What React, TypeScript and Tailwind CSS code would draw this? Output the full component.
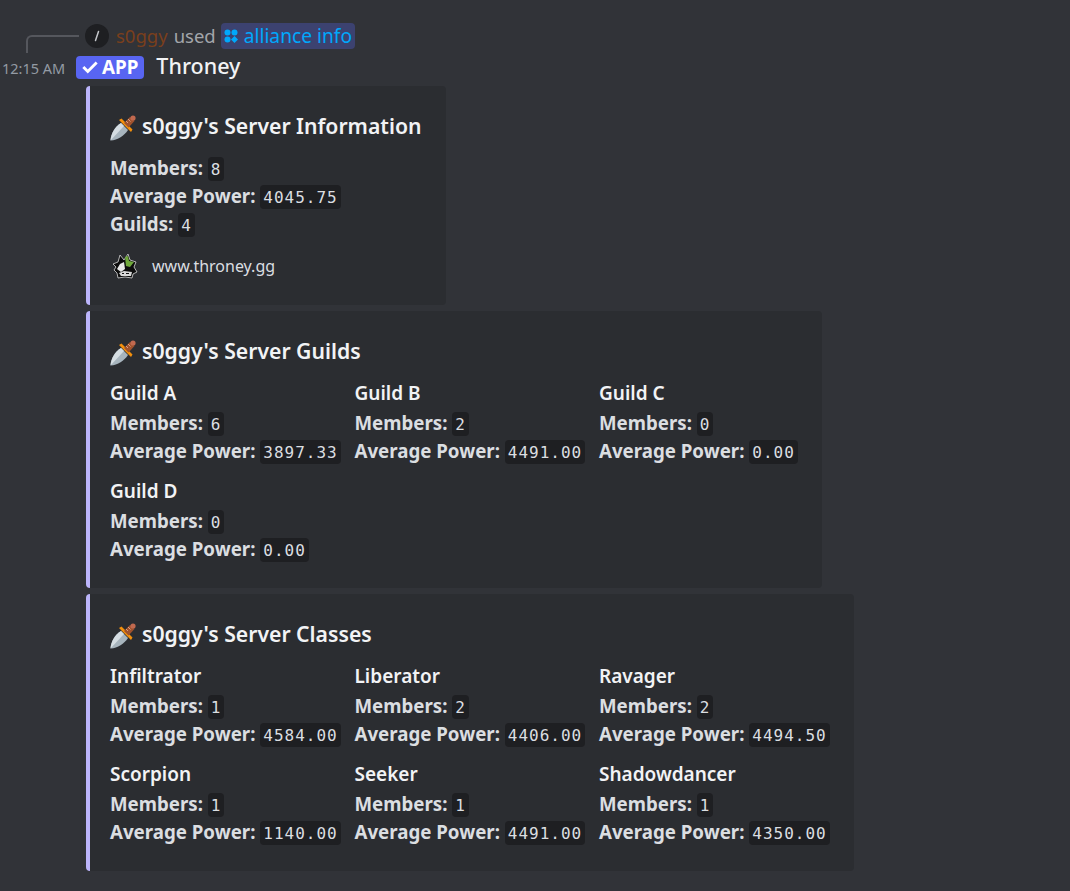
const sans = "font-['Noto_Sans','Open_Sans',sans-serif]";

function Dagger() {
  return (
    <svg width="26" height="26" viewBox="0 0 26 26" className="mr-[6px] mt-[4px] shrink-0">
      <path d="M0.5 25.5 C1 18 5 12 11 8 L18 15 C14 21 8 25 0.5 25.5 Z" fill="#a7b4bd" />
      <path d="M0.5 25.5 C1 18 5 12 11 8 L14 11 Z" fill="#d5dde2" />
      <path d="M9 5 L11.5 3.5 L22.5 14.5 L21 17 Z" fill="#f4900c" />
      <path d="M14 8 L20 2 L24.5 6 L18.5 12.5 Z" fill="#a0522d" />
      <path d="M16 6 L18 8 M18 4 L20.5 6.5" stroke="#d99e82" strokeWidth="1" />
      <circle cx="23" cy="3" r="2.6" fill="#c1694f" />
    </svg>
  );
}

function Logo() {
  return (
    <svg width="26" height="26" viewBox="0 0 26 26" className="ml-[2px] shrink-0">
      <path d="M1 11 L6 9 L8 2 L12 7 L16 1 L18 7 L24 9 L22 14 L25 19 L21 21 L20 25 L13 24 L6 25 L5 20 L2 17 L4 14 Z" fill="#0c0c0c" stroke="#d8d8d8" strokeWidth="0.8" />
      <path d="M8 11 L12 9 L13 16 L9 19 L5 16 Z" fill="#e8e8e8" />
      <path d="M13 4 L16 3 L17 8 L22 9 L18 14 L14 13 Z" fill="#6fa83a" />
      <path d="M7 20 L12 18 L20 19 L19 23 L9 23 Z" fill="#d8d8d8" />
      <path d="M10 20.5 L12 20.5 M14 20.5 L17 20.5" stroke="#111" strokeWidth="1.2" />
    </svg>
  );
}

function Code({ children }: { children: React.ReactNode }) {
  return (
    <code className="rounded-[4px] bg-[#1e1f22] px-[3px] py-[2.5px] align-[1px] font-['DejaVu_Sans_Mono',monospace] text-[16px] leading-[18px] tracking-[1px] text-[#dbdee1]">
      {children}
    </code>
  );
}

function Stat({ label, value }: { label: string; value: string }) {
  return (
    <div className="h-[28px] whitespace-nowrap text-[18.7px] leading-[28px] text-[#dbdee1]">
      <span className="font-bold">{label}:</span> <Code>{value}</Code>
    </div>
  );
}

function Field({ name, members, power }: { name: string; members: string; power: string }) {
  return (
    <div>
      <div className="mb-[2px] text-[19px] font-semibold leading-[28px] text-[#f2f3f5]">{name}</div>
      <Stat label="Members" value={members} />
      <Stat label="Average Power" value={power} />
    </div>
  );
}

function Embed({ title, children }: { title: string; children: React.ReactNode }) {
  return (
    <div className="w-fit rounded-[4px] border-l-4 border-[#bcb5fb] bg-[#2b2d31] pb-[25px] pl-[20px] pr-[24px] pt-[24px]">
      <div className="mb-[12px] flex h-[32px] items-center text-[21.2px] font-semibold text-[#f2f3f5]">
        <Dagger />
        <span>{title}</span>
      </div>
      {children}
    </div>
  );
}

const guilds = [
  ["Guild A", "6", "3897.33"],
  ["Guild B", "2", "4491.00"],
  ["Guild C", "0", "0.00"],
  ["Guild D", "0", "0.00"],
];

const classes = [
  ["Infiltrator", "1", "4584.00"],
  ["Liberator", "2", "4406.00"],
  ["Ravager", "2", "4494.50"],
  ["Scorpion", "1", "1140.00"],
  ["Seeker", "1", "4491.00"],
  ["Shadowdancer", "1", "4350.00"],
];

function Fields({ rows }: { rows: string[][] }) {
  return (
    <div className="grid grid-cols-[244.5px_244.5px_auto] gap-y-[12px]">
      {rows.map(([name, members, power]) => (
        <Field key={name} name={name} members={members} power={power} />
      ))}
    </div>
  );
}

export default function App() {
  return (
    <div className={`relative min-h-[891px] bg-[#313338] pt-[24px] ${sans}`}>
      {/* reply line */}
      <div className="absolute left-[26px] top-[35px] h-[18px] w-[53px] rounded-tl-[6px] border-l-2 border-t-2 border-[#55575d]" />

      <div className="flex h-[24px] items-center pl-[85px] text-[18.5px]">
        <div className="flex h-[24px] w-[24px] items-center justify-center rounded-full bg-[#1e1f22]">
          <svg width="12" height="12" viewBox="0 0 12 12" fill="none" stroke="#c4c7cb" strokeWidth="1.5" strokeLinecap="round">
            <path d="M7.5 1.5 L4.5 10.5" />
          </svg>
        </div>
        <span className="ml-[7px] text-[#7a3f1c]">s0ggy</span>
        <span className="ml-[6px] text-[#a3a6aa]">used</span>
        <span className="ml-[5px] flex h-[26px] items-center rounded-[4px] bg-[#3c4270] px-[3px] text-[19.2px] text-[#00a8fc]">
          <svg width="14" height="14" viewBox="0 0 14 14" className="mr-[6px]" fill="#00a8fc">
            <circle cx="3.5" cy="3.5" r="3" />
            <circle cx="10.5" cy="3.5" r="3" />
            <circle cx="3.5" cy="10.5" r="3" />
            <path d="M10.5 7 L14 10.5 L10.5 14 L7 10.5 Z" />
          </svg>
          alliance info
        </span>
      </div>

      <div className="mt-[7px] flex h-[24px] items-center">
        <span className="ml-[2px] mt-[4px] w-[74px] whitespace-nowrap text-[14.5px] text-[#949ba4]">12:15 AM</span>
        <span className="flex h-[23px] items-center rounded-[4px] bg-[#5865f2] pl-[4px] pr-[6px] text-[18.8px] font-bold text-white">
          <svg width="20" height="20" viewBox="0 0 18 18" className="mr-[2px]" fill="none" stroke="white" strokeWidth="2.6">
            <path d="M3 9 L7 13 L15 5" />
          </svg>
          APP
        </span>
        <span className="mb-[2px] ml-[12px] text-[21.5px] font-medium text-[#f2f3f5]">Throney</span>
      </div>

      <div className="ml-[86px] mt-[7px] flex flex-col gap-[6px]">
        <Embed title="s0ggy's Server Information">
          <Stat label="Members" value="8" />
          <Stat label="Average Power" value="4045.75" />
          <Stat label="Guilds" value="4" />
          <div className="mt-[14px] flex h-[28px] items-center text-[16px] text-[#dbdee1]">
            <Logo />
            <span className="ml-[14px]">www.throney.gg</span>
          </div>
        </Embed>
        <Embed title="s0ggy's Server Guilds">
          <Fields rows={guilds} />
        </Embed>
        <Embed title="s0ggy's Server Classes">
          <Fields rows={classes} />
        </Embed>
      </div>
    </div>
  );
}
